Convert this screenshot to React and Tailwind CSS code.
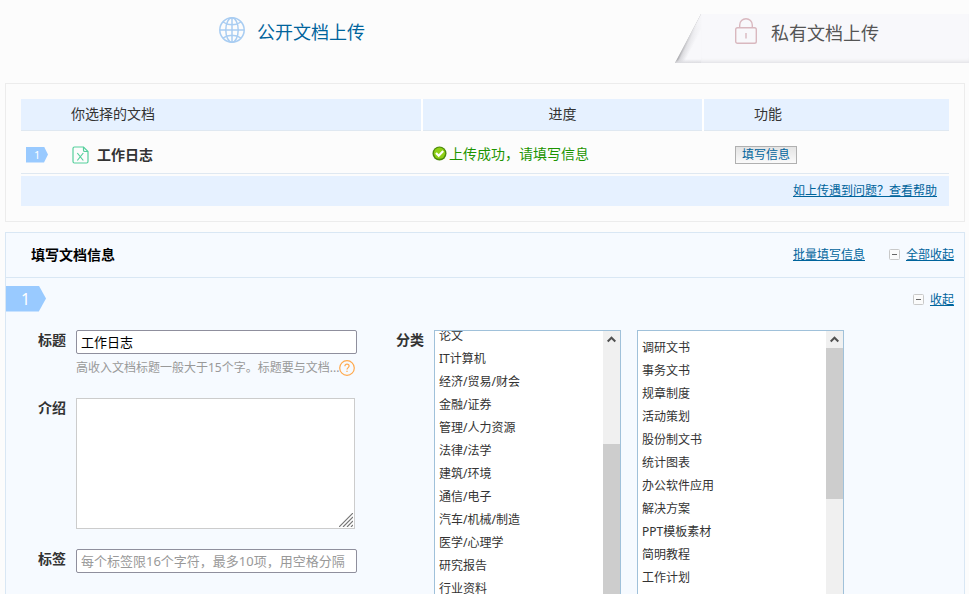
import React, { useEffect, useRef, useState } from 'react';
import clsx from 'clsx';

const CATEGORIES = [
  '论文',
  'IT计算机',
  '经济/贸易/财会',
  '金融/证券',
  '管理/人力资源',
  '法律/法学',
  '建筑/环境',
  '通信/电子',
  '汽车/机械/制造',
  '医学/心理学',
  '研究报告',
  '行业资料',
];

const SUB_CATEGORIES = [
  '调研文书',
  '事务文书',
  '规章制度',
  '活动策划',
  '股份制文书',
  '统计图表',
  '办公软件应用',
  '解决方案',
  'PPT模板素材',
  '简明教程',
  '工作计划',
];

function GlobeIcon() {
  return (
    <svg width="26" height="26" viewBox="0 0 26 26" fill="none" stroke="#a9cdf2" strokeWidth="1.5" aria-hidden="true">
      <circle cx="13" cy="13" r="12.2" />
      <ellipse cx="13" cy="13" rx="6.2" ry="12.2" />
      <path d="M13 1v24M1 13h24M4 5c5 3.600 13 3.600 18 0M4 21c5-3.600 13-3.600 18 0" />
    </svg>
  );
}

function LockIcon() {
  return (
    <svg width="22" height="26" viewBox="0 0 22 26" fill="none" stroke="#d9b8bf" strokeWidth="1.4" aria-hidden="true">
      <rect x="0.7" y="9.700" width="20.600" height="15.600" rx="1.800" />
      <path d="M4.700 9.700V7a6.300 6.300 0 0 1 12.600 0v2.700" />
      <path d="M11 15v5.500" />
    </svg>
  );
}

function ExcelIcon() {
  return (
    <svg width="17" height="18" viewBox="0 0 17 18" fill="none" stroke="#55cf9c" strokeWidth="1.2" aria-hidden="true">
      <path d="M2.500 1h9l4.500 4.500v10a1.500 1.500 0 0 1-1.500 1.500h-12A1.500 1.500 0 0 1 1 15.500v-13A1.500 1.500 0 0 1 2.500 1z" />
      <path d="M11.500 1v3.200c0 .8.500 1.300 1.300 1.300H16" />
      <path d="M5.300 7l6 7.500M11.300 7l-6 7.500" />
    </svg>
  );
}

function SuccessIcon() {
  return (
    <svg width="15" height="15" viewBox="0 0 15 15" aria-hidden="true">
      <circle cx="7.500" cy="7.500" r="7" fill="#4b8b0b" />
      <circle cx="7.500" cy="7.200" r="5.600" fill="#8fd016" />
      <path d="M4 7l2.700 2.700L11.200 5" fill="none" stroke="#fff" strokeWidth="2.200" />
    </svg>
  );
}

function MinusIcon() {
  return (
    <svg width="11" height="11" viewBox="0 0 11 11" aria-hidden="true">
      <rect x="0.500" y="0.500" width="10" height="10" rx="1" fill="#fbfbfb" stroke="#c9c9c9" />
      <path d="M3 5.500h5" stroke="#666" />
    </svg>
  );
}

function HelpIcon() {
  return (
    <svg width="16" height="16" viewBox="0 0 16 16" fill="none" stroke="#ffa94d" strokeWidth="1.2" aria-hidden="true">
      <circle cx="8" cy="8" r="7.300" />
      <path d="M5.900 6.200c0-1.300.9-2 2.100-2s2.100.8 2.100 1.900c0 1.500-2.100 1.600-2.100 3.500M8 10.800v1.300" />
    </svg>
  );
}

// slanted left edge of the inactive tab, its shadow fades out towards the top
function TabEdge() {
  return (
    <svg width="26" height="49" viewBox="0 0 26 49" aria-hidden="true">
      <defs>
        <linearGradient id="edgeShadow" gradientUnits="userSpaceOnUse" x1="13" y1="24.500" x2="20" y2="28.200">
          <stop offset="0" stopColor="#98989c" />
          <stop offset="0.3" stopColor="#d4d4d8" />
          <stop offset="1" stopColor="#f8f8fb" />
        </linearGradient>
        <linearGradient id="edgeFade" x1="0" y1="0" x2="0" y2="1">
          <stop offset="0" stopColor="#f8f8fb" />
          <stop offset="0.2" stopColor="#f8f8fb" stopOpacity="0.900" />
          <stop offset="1" stopColor="#f8f8fb" stopOpacity="0" />
        </linearGradient>
        <linearGradient id="bottomShadow" x1="0" y1="0" x2="0" y2="1">
          <stop offset="0.920" stopColor="#dcdce0" stopOpacity="0" />
          <stop offset="1" stopColor="#dcdce0" />
        </linearGradient>
      </defs>
      <path d="M26 0L0 49h26z" fill="url(#edgeShadow)" />
      <path d="M26 0L0 49h26z" fill="url(#edgeFade)" />
      <path d="M26 0L0 49h26z" fill="url(#bottomShadow)" />
    </svg>
  );
}

function CategoryList({ label, items, selected, onSelect, scrollTop, className, listClass, trackClass, thumbClass }) {
  const ref = useRef(null);

  useEffect(() => {
    ref.current.scrollTop = scrollTop;
  }, [scrollTop]);

  return (
    <div className={clsx('flex h-[268px] border border-[#a0c1da] bg-white', className)}>
      <ul ref={ref} aria-label={label} className={clsx('flex-1 overflow-hidden', listClass)}>
        {items.map((item) => (
          <li key={item}>
            <button
              type="button"
              onClick={() => onSelect(item)}
              className={clsx('block h-[23px] w-full pl-1 text-left text-xs leading-[23px]', selected === item && 'bg-[#e6f1ff]')}
            >
              {item}
            </button>
          </li>
        ))}
      </ul>
      <div className="flex w-[17px] flex-col bg-[#f0f0f0]" aria-hidden="true">
        <div className="flex h-[17px] items-center justify-center">
          <svg width="9" height="7" viewBox="0 0 9 7" fill="none" stroke="#505050" strokeWidth="2">
            <path d="M0.700 5.500L4.500 1.700l3.800 3.800" />
          </svg>
        </div>
        <div className={trackClass} />
        <div className={clsx('bg-[#cdcdcd]', thumbClass)} />
      </div>
    </div>
  );
}

export default function App() {
  const [title, setTitle] = useState('工作日志');
  const [intro, setIntro] = useState('');
  const [tags, setTags] = useState('');
  const [category, setCategory] = useState(null);
  const [subCategory, setSubCategory] = useState(null);

  return (
    <div className="min-h-screen bg-[#fcfcfc] font-['Noto_Sans','Noto_Sans_CJK_SC',sans-serif] text-sm text-[#333]">
      <nav className="flex h-[63px]">
        <a href="#public" className="flex flex-1 items-center gap-3 pl-[219px] text-lg text-[#00649c]">
          <span className="pb-1">
            <GlobeIcon />
          </span>
          公开文档上传
        </a>
        <a href="#private" className="mt-3.5 flex w-[294px] text-lg text-[#555]">
          <TabEdge />
          <span className="flex flex-1 items-center gap-3.5 bg-[#f8f8fb] pb-3 pl-[34px] shadow-[inset_0_-4px_4px_-3px_#dcdce0]">
            <span className="pb-1">
              <LockIcon />
            </span>
            私有文档上传
          </span>
        </a>
      </nav>

      <main className="mt-5 pr-1 pl-[5px]">
        <section className="border border-[#ececec] p-[15px]">
          <table className="w-full table-fixed border-collapse">
            <colgroup>
              <col className="w-[401px]" />
              <col />
              <col className="w-[246px]" />
            </colgroup>
            <thead>
              <tr className="h-[31px] bg-[#e6f1ff]">
                <th className="border-r-2 border-b border-r-white border-b-[#dfe8f1] pl-[50px] text-left font-normal">你选择的文档</th>
                <th className="border-r-2 border-b border-r-white border-b-[#dfe8f1] font-normal">进度</th>
                <th className="border-b border-b-[#dfe8f1] pl-[50px] text-left font-normal">功能</th>
              </tr>
            </thead>
            <tbody>
              <tr className="h-[43px] border-b border-[#dfe8f1]">
                <td className="pt-1.5">
                  <div className="flex items-center pl-[5px]">
                    <span className="flex h-4 w-[22px] items-center bg-[#99caff] pl-2 text-[11px] text-white [clip-path:polygon(0_0,82%_0,100%_50%,82%_100%,0_100%)]">1</span>
                    <span className="mr-2 ml-6">
                      <ExcelIcon />
                    </span>
                    <span className="font-bold">工作日志</span>
                  </div>
                </td>
                <td className="pt-1">
                  <div className="flex items-center gap-0.5 pl-2.5 text-[#1c9400]">
                    <SuccessIcon />
                    上传成功，请填写信息
                  </div>
                </td>
                <td className="pt-1.5 pl-8">
                  <button type="button" className="block h-[18px] border border-[#b0b0b0] bg-linear-to-b from-[#e4e4e4] to-[#fafafa] px-1.5 text-xs leading-4 text-[#00649c]">
                    填写信息
                  </button>
                </td>
              </tr>
            </tbody>
          </table>
          <div className="mt-0.5 flex h-[30px] items-center justify-end bg-[#e6f1ff] pr-3 text-xs">
            <a href="#help" className="text-[#00649c] underline">如上传遇到问题？查看帮助</a>
          </div>
        </section>

        <section className="mt-2.5 border border-[#d9e7f4] bg-[#f6faff] pb-6">
          <header className="flex h-[45px] items-center border-b border-[#d9e7f4] pr-2.5 pl-[25px] text-xs">
            <h2 className="flex-1 text-sm font-bold text-black">填写文档信息</h2>
            <a href="#batch" className="mr-6 text-[#00649c] underline">批量填写信息</a>
            <span className="flex items-center gap-1.5">
              <MinusIcon />
              <a href="#collapse-all" className="text-[#00649c] underline">全部收起</a>
            </span>
          </header>

          <div className="flex h-[52px] items-start justify-between pt-2 pr-2.5 text-xs">
            <span className="flex h-[26px] w-10 items-center bg-[#99caff] pl-[15px] text-base text-white [clip-path:polygon(0_0,82%_0,100%_50%,82%_100%,0_100%)]">1</span>
            <span className="flex h-7 items-center gap-1.5">
              <MinusIcon />
              <a href="#collapse" className="text-[#00649c] underline">收起</a>
            </span>
          </div>

          <form className="flex items-start pl-8" onSubmit={(e) => e.preventDefault()}>
            <div className="w-[319px]">
              <div className="flex">
                <label htmlFor="title" className="w-[38px] font-bold">标题</label>
                <input id="title" type="text" value={title} onChange={(e) => setTitle(e.target.value)} className="h-6 w-[281px] rounded-xs border border-[#8f8f9d] bg-white px-1 text-[13px] text-black outline-none" />
              </div>
              <p className="flex h-7 items-center pl-[38px] text-xs text-[#999]">
                高收入文档标题一般大于15个字。标题要与文档...
                <HelpIcon />
              </p>
              <div className="mt-4 flex">
                <label htmlFor="intro" className="w-[38px] font-bold">介绍</label>
                <div className="relative h-[131px] w-[279px]">
                  <textarea id="intro" value={intro} onChange={(e) => setIntro(e.target.value)} className="block h-full w-full resize-none border border-[#ccc] bg-white p-1 text-[13px] outline-none" />
                  <svg className="pointer-events-none absolute right-0.5 bottom-0.5" width="14" height="14" viewBox="0 0 14 14" stroke="#777" strokeWidth="1.200" aria-hidden="true">
                    <path d="M0 14L14 0M4 14L14 4M8 14l6-6M12 14l2-2" />
                  </svg>
                </div>
              </div>
              <div className="mt-5 flex">
                <label htmlFor="tags" className="w-[38px] font-bold">标签</label>
                <input id="tags" type="text" value={tags} onChange={(e) => setTags(e.target.value)} placeholder="每个标签限16个字符，最多10项，用空格分隔" className="h-6 w-[281px] rounded-xs border border-[#8f8f9d] bg-white px-1 text-[13px] outline-none placeholder:text-[#999]" />
              </div>
            </div>

            <div className="ml-[39px] flex">
              <span className="w-[38px] font-bold">分类</span>
              <CategoryList
                label="分类"
                items={CATEGORIES}
                selected={category}
                onSelect={setCategory}
                scrollTop={7}
                className="w-[187px]"
                trackClass="h-24"
                thumbClass="flex-1"
              />
              <CategoryList
                label="子分类"
                items={SUB_CATEGORIES}
                selected={subCategory}
                onSelect={setSubCategory}
                scrollTop={0}
                className="ml-4 w-[207px]"
                listClass="pt-[5px]"
                thumbClass="h-[151px]"
              />
            </div>
          </form>
        </section>
      </main>
    </div>
  );
}
